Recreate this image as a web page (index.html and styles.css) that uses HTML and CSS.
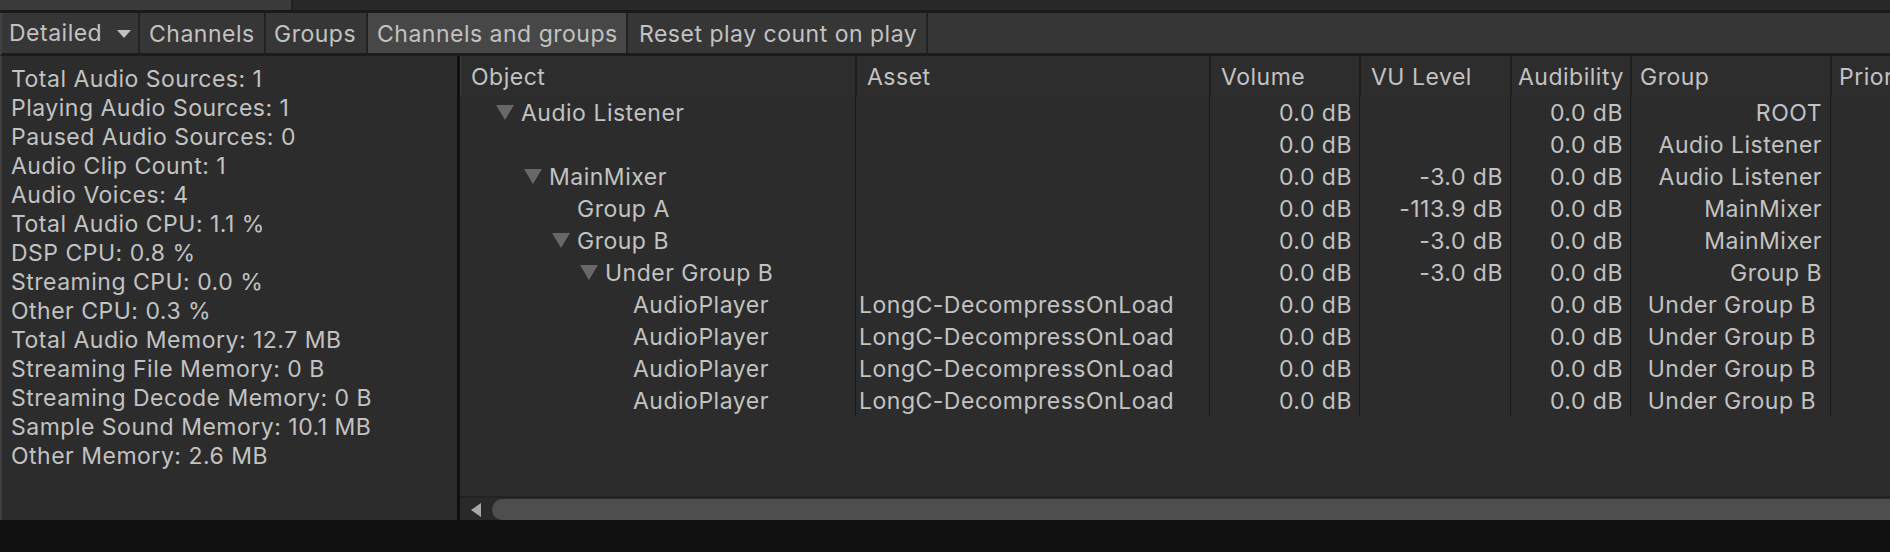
FILE: index.html
```html
<!DOCTYPE html>
<html>
<head>
<meta charset="utf-8">
<link rel="stylesheet" href="styles.css">
</head>
<body>
<div class="window">
  <div class="topstrip"><div class="tabarea"></div></div>
  <div class="toolbar">
    <div class="btn btn-drop">Detailed<span class="drop-arrow"></span></div>
    <div class="btn">Channels</div>
    <div class="btn">Groups</div>
    <div class="btn active">Channels and groups</div>
    <div class="btn">Reset play count on play</div>
    <div class="toolbar-rest"></div>
  </div>
  <div class="content">
    <div class="stats">
      <div class="stat">Total Audio Sources: 1</div>
      <div class="stat">Playing Audio Sources: 1</div>
      <div class="stat">Paused Audio Sources: 0</div>
      <div class="stat">Audio Clip Count: 1</div>
      <div class="stat">Audio Voices: 4</div>
      <div class="stat">Total Audio CPU: 1.1 %</div>
      <div class="stat">DSP CPU: 0.8 %</div>
      <div class="stat">Streaming CPU: 0.0 %</div>
      <div class="stat">Other CPU: 0.3 %</div>
      <div class="stat">Total Audio Memory: 12.7 MB</div>
      <div class="stat">Streaming File Memory: 0 B</div>
      <div class="stat">Streaming Decode Memory: 0 B</div>
      <div class="stat">Sample Sound Memory: 10.1 MB</div>
      <div class="stat">Other Memory: 2.6 MB</div>
    </div>
    <div class="tablepane">
      <div class="table">
        <div class="hrow">
          <div class="hcell c-obj">Object</div>
          <div class="hcell c-asset">Asset</div>
          <div class="hcell c-vol">Volume</div>
          <div class="hcell c-vu">VU Level</div>
          <div class="hcell c-aud">Audibility</div>
          <div class="hcell c-grp">Group</div>
          <div class="hcell c-pri">Priority</div>
        </div>

        <div class="row">
          <div class="cell c-obj tree l0"><span class="tri"></span>Audio Listener</div>
          <div class="cell c-asset"></div>
          <div class="cell c-vol num">0.0 dB</div>
          <div class="cell c-vu num"></div>
          <div class="cell c-aud num">0.0 dB</div>
          <div class="cell c-grp num">ROOT</div>
          <div class="cell c-pri"></div>
        </div>
        <div class="row">
          <div class="cell c-obj tree l0"></div>
          <div class="cell c-asset"></div>
          <div class="cell c-vol num">0.0 dB</div>
          <div class="cell c-vu num"></div>
          <div class="cell c-aud num">0.0 dB</div>
          <div class="cell c-grp num">Audio Listener</div>
          <div class="cell c-pri"></div>
        </div>
        <div class="row">
          <div class="cell c-obj tree l1"><span class="tri"></span>MainMixer</div>
          <div class="cell c-asset"></div>
          <div class="cell c-vol num">0.0 dB</div>
          <div class="cell c-vu num">-3.0 dB</div>
          <div class="cell c-aud num">0.0 dB</div>
          <div class="cell c-grp num">Audio Listener</div>
          <div class="cell c-pri"></div>
        </div>
        <div class="row">
          <div class="cell c-obj tree l2"><span class="tri none"></span>Group A</div>
          <div class="cell c-asset"></div>
          <div class="cell c-vol num">0.0 dB</div>
          <div class="cell c-vu num">-113.9 dB</div>
          <div class="cell c-aud num">0.0 dB</div>
          <div class="cell c-grp num">MainMixer</div>
          <div class="cell c-pri"></div>
        </div>
        <div class="row">
          <div class="cell c-obj tree l2"><span class="tri"></span>Group B</div>
          <div class="cell c-asset"></div>
          <div class="cell c-vol num">0.0 dB</div>
          <div class="cell c-vu num">-3.0 dB</div>
          <div class="cell c-aud num">0.0 dB</div>
          <div class="cell c-grp num">MainMixer</div>
          <div class="cell c-pri"></div>
        </div>
        <div class="row">
          <div class="cell c-obj tree l3"><span class="tri"></span>Under Group B</div>
          <div class="cell c-asset"></div>
          <div class="cell c-vol num">0.0 dB</div>
          <div class="cell c-vu num">-3.0 dB</div>
          <div class="cell c-aud num">0.0 dB</div>
          <div class="cell c-grp num">Group B</div>
          <div class="cell c-pri"></div>
        </div>
        <div class="row">
          <div class="cell c-obj tree l4"><span class="tri none"></span>AudioPlayer</div>
          <div class="cell c-asset">LongC-DecompressOnLoad</div>
          <div class="cell c-vol num">0.0 dB</div>
          <div class="cell c-vu num"></div>
          <div class="cell c-aud num">0.0 dB</div>
          <div class="cell c-grp num trail">Under Group B</div>
          <div class="cell c-pri"></div>
        </div>
        <div class="row">
          <div class="cell c-obj tree l4"><span class="tri none"></span>AudioPlayer</div>
          <div class="cell c-asset">LongC-DecompressOnLoad</div>
          <div class="cell c-vol num">0.0 dB</div>
          <div class="cell c-vu num"></div>
          <div class="cell c-aud num">0.0 dB</div>
          <div class="cell c-grp num trail">Under Group B</div>
          <div class="cell c-pri"></div>
        </div>
        <div class="row">
          <div class="cell c-obj tree l4"><span class="tri none"></span>AudioPlayer</div>
          <div class="cell c-asset">LongC-DecompressOnLoad</div>
          <div class="cell c-vol num">0.0 dB</div>
          <div class="cell c-vu num"></div>
          <div class="cell c-aud num">0.0 dB</div>
          <div class="cell c-grp num trail">Under Group B</div>
          <div class="cell c-pri"></div>
        </div>
        <div class="row">
          <div class="cell c-obj tree l4"><span class="tri none"></span>AudioPlayer</div>
          <div class="cell c-asset">LongC-DecompressOnLoad</div>
          <div class="cell c-vol num">0.0 dB</div>
          <div class="cell c-vu num"></div>
          <div class="cell c-aud num">0.0 dB</div>
          <div class="cell c-grp num trail">Under Group B</div>
          <div class="cell c-pri"></div>
        </div>
      </div>
      <div class="filler"></div>
      <div class="hscroll">
        <span class="larrow"></span>
        <div class="thumb"></div>
      </div>
    </div>
  </div>
  <div class="footer"></div>
</div>
</body>
</html>
```

FILE: styles.css
```css
* { box-sizing: border-box; }
html, body {
  margin: 0;
  padding: 0;
  background: #111111;
}
body {
  width: 1890px;
  height: 552px;
  overflow: hidden;
  font-family: "Inter", "Noto Sans", sans-serif;
  font-size: 23px;
  letter-spacing: 0.5px;
  color: #c2c2c2;
}
.window {
  display: flex;
  flex-direction: column;
  width: 1890px;
  height: 552px;
}
.topstrip {
  height: 13px;
  background: #282828;
  border-bottom: 3px solid #1a1a1a;
  display: flex;
}
.tabarea {
  width: 293px;
  background: #3a3a3a;
  border-right: 2px solid #222;
}
.toolbar {
  height: 43px;
  display: flex;
  background: #363636;
  border-bottom: 3px solid #1c1c1c;
  border-left: 2px solid #424242;
}
.btn {
  height: 40px;
  line-height: 43px;
  overflow: hidden;
  padding: 0 9px;
  white-space: nowrap;
  border-right: 2px solid #232323;
  background: #363636;
}
.btn-drop {
  display: flex;
  align-items: center;
  width: 138px;
  padding-left: 7px;
}
.drop-arrow {
  width: 0;
  height: 0;
  margin-left: 15px;
  margin-top: 1px;
  border-left: 7px solid transparent;
  border-right: 7px solid transparent;
  border-top: 8px solid #c2c2c2;
}
.btn:nth-child(2) { width: 126px; padding-left: 9px; }
.btn:nth-child(3) { width: 102px; padding-left: 8px; }
.btn.active { width: 260px; background: #474747; padding-left: 9px; }
.btn:nth-child(5) { width: 300px; padding-left: 11px; }
.toolbar-rest { flex: 1; }

.content {
  height: 464px;
  display: flex;
  background: #2c2c2c;
}
.stats {
  width: 460px;
  flex: none;
  padding: 9px 0 0 9px;
  border-left: 2px solid #3f3f3f;
  border-right: 3px solid #0f0f0f;
  background: #2c2c2c;
}
.stat {
  height: 29px;
  line-height: 29px;
  white-space: nowrap;
}
.tablepane {
  flex: 1;
  min-width: 0;
  display: flex;
  flex-direction: column;
  overflow: hidden;
}
.table {
  display: flex;
  flex-direction: column;
}
.hrow, .row {
  display: grid;
  grid-template-columns: 395px 354px 150px 151px 120px 200px 120px;
}
.hrow { height: 40px; }
.row { height: 32px; }
.hcell {
  line-height: 42px;
  padding-left: 10px;
  white-space: nowrap;
  overflow: hidden;
  border-left: 2px solid #1f1f1f;
  background: #2d2d2d;
}
.hcell.c-obj {
  padding-left: 10px;
  border-left: 1px solid #3a3a3a;
}
.hcell.c-aud { padding-left: 6px; }
.hcell.c-grp { padding-left: 8px; }
.hcell.c-pri { padding-left: 7px; }
.cell {
  height: 32px;
  line-height: 34px;
  white-space: pre;
  overflow: hidden;
  border-left: 1px solid #1a1a1a;
  padding-left: 3px;
}
.cell.c-obj { border-left: none; }
.num {
  text-align: right;
  padding-right: 7px;
}
.cell.c-grp.num { padding-right: 8px; }
.cell.c-grp.trail { padding-right: 14px; }
.tree {
  display: flex;
  align-items: flex-start;
}
.l0 { padding-left: 36px; }
.l1 { padding-left: 64px; }
.l2 { padding-left: 92px; }
.l3 { padding-left: 120px; }
.l4 { padding-left: 148px; }
.tri {
  flex: none;
  width: 0;
  height: 0;
  margin-top: 9px;
  margin-right: 7px;
  border-left: 9px solid transparent;
  border-right: 9px solid transparent;
  border-top: 15px solid #686868;
}
.tri.none { border-top-color: transparent; }
.filler { flex: 1; }
.hscroll {
  height: 24px;
  flex: none;
  display: flex;
  align-items: flex-end;
  background: #292929;
  border-top: 2px solid #232323;
}
.larrow {
  width: 0;
  height: 0;
  margin-left: 11px;
  margin-bottom: 3px;
  border-top: 7px solid transparent;
  border-bottom: 7px solid transparent;
  border-right: 10px solid #a8a8a8;
}
.thumb {
  flex: 1;
  height: 21px;
  margin-left: 11px;
  background: #4e4e4e;
  border-radius: 11px 0 0 11px;
}
.footer {
  flex: 1;
  background: #111111;
}
```
